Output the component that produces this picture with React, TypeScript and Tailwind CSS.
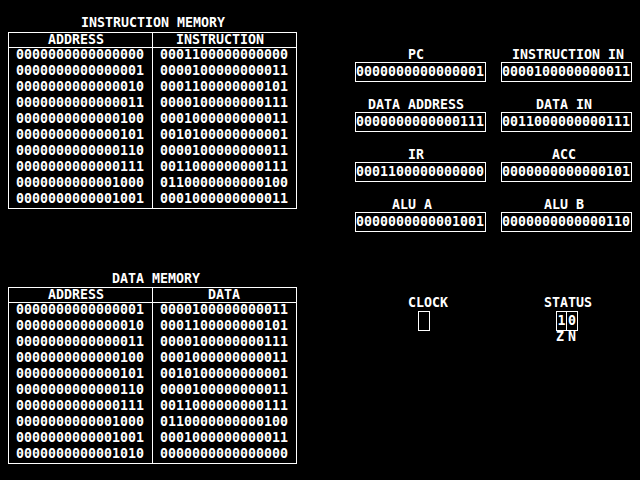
import React from 'react'

type Row = [string, string]

const instructionMemory: Row[] = [
  ['0000000000000000', '0001100000000000'],
  ['0000000000000001', '0000100000000011'],
  ['0000000000000010', '0001100000000101'],
  ['0000000000000011', '0000100000000111'],
  ['0000000000000100', '0001000000000011'],
  ['0000000000000101', '0010100000000001'],
  ['0000000000000110', '0000100000000011'],
  ['0000000000000111', '0011000000000111'],
  ['0000000000001000', '0110000000000100'],
  ['0000000000001001', '0001000000000011'],
]

const dataMemory: Row[] = [
  ['0000000000000001', '0000100000000011'],
  ['0000000000000010', '0001100000000101'],
  ['0000000000000011', '0000100000000111'],
  ['0000000000000100', '0001000000000011'],
  ['0000000000000101', '0010100000000001'],
  ['0000000000000110', '0000100000000011'],
  ['0000000000000111', '0011000000000111'],
  ['0000000000001000', '0110000000000100'],
  ['0000000000001001', '0001000000000011'],
  ['0000000000001010', '0000000000000000'],
]

// label offsets keep the text on the 8px character grid of the original
const registers = [
  { label: 'PC', value: '0000000000000001', pad: 'pl-[53px]' },
  { label: 'INSTRUCTION IN', value: '0000100000000011', pad: 'pl-[11px]' },
  { label: 'DATA ADDRESS', value: '0000000000000111', pad: 'pl-[13px]' },
  { label: 'DATA IN', value: '0011000000000111', pad: 'pl-[35px]' },
  { label: 'IR', value: '0001100000000000', pad: 'pl-[53px]' },
  { label: 'ACC', value: '0000000000000101', pad: 'pl-[51px]' },
  { label: 'ALU A', value: '0000000000001001', pad: 'pl-[37px]' },
  { label: 'ALU B', value: '0000000000000110', pad: 'pl-[43px]' },
]

function MemoryTable({
  rows,
  valueHeader,
  valuePad,
}: {
  rows: Row[]
  valueHeader: string
  valuePad: string
}) {
  return (
    <div className="w-[289px] border border-white">
      <div className="flex h-[15px] border-b border-white leading-[14px]">
        <div className="w-[144px] border-r border-white pl-[39px]">ADDRESS</div>
        <div className={`flex-1 ${valuePad}`}>{valueHeader}</div>
      </div>
      <div className="h-[160px] overflow-hidden">
        {rows.map(([addr, value]) => (
          <div key={addr} className="flex h-[16px] leading-[14px]">
            <div className="w-[144px] border-r border-white pl-[7px]">{addr}</div>
            <div className="flex-1 pl-[7px]">{value}</div>
          </div>
        ))}
      </div>
    </div>
  )
}

function Register({ label, value, pad }: { label: string; value: string; pad: string }) {
  return (
    <div className="flex flex-col">
      <div className={`h-[13px] leading-[12px] whitespace-pre ${pad}`}>{label}</div>
      <div className="h-[20px] border border-white leading-[18px]">{value}</div>
    </div>
  )
}

export default function App() {
  return (
    <div className="flex h-[480px] w-[640px] overflow-hidden bg-black font-['DejaVu_Sans_Mono',monospace] text-[13.29px] font-bold text-white">
      {/* memories */}
      <div className="flex w-[297px] flex-col pl-[8px] pt-[17px]">
        <div className="h-[15px] pl-[73px] leading-[12px] whitespace-pre">INSTRUCTION MEMORY</div>
        <MemoryTable rows={instructionMemory} valueHeader="INSTRUCTION" valuePad="pl-[23px]" />

        <div className="mt-[64px] h-[14px] pl-[104px] leading-[12px] whitespace-pre">DATA MEMORY</div>
        <MemoryTable rows={dataMemory} valueHeader="DATA" valuePad="pl-[55px]" />
      </div>

      {/* registers, clock and flags */}
      <div className="flex flex-col pl-[58px] pt-[49px]">
        <div className="grid grid-cols-[131px_131px] gap-x-[15px] gap-y-[17px]">
          {registers.map((r) => (
            <Register key={r.label} {...r} />
          ))}
        </div>

        <div className="mt-[65px] flex">
          <div className="flex flex-col pl-[53px]">
            <div className="h-[14px] leading-[12px]">CLOCK</div>
            <div className="ml-[10px] h-[20px] w-[12px] border border-white" />
          </div>

          <div className="ml-[96px] flex flex-col">
            <div className="h-[14px] leading-[12px]">STATUS</div>
            <div className="ml-[12px] flex h-[20px] w-[22px] border border-white leading-[18px]">
              <div className="w-[10px] border-r border-white text-center">1</div>
              <div className="w-[10px] text-center">0</div>
            </div>
            <div className="ml-[12px] flex h-[12px] leading-[12px]">
              <span className="w-[12px]">Z</span>
              <span className="w-[12px]">N</span>
            </div>
          </div>
        </div>
      </div>
    </div>
  )
}
